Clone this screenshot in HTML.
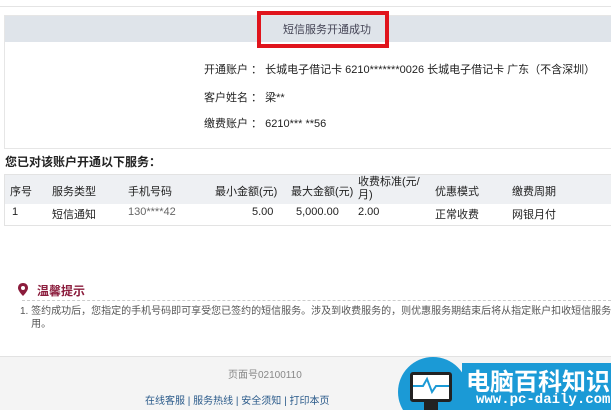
<!DOCTYPE html>
<html style="overflow:hidden;height:410px"><head><meta charset="utf-8"><style>
html,body{overflow:hidden}
body{margin:0;width:611px;height:410px;background:#fff;font-family:"Liberation Sans","Noto Sans CJK SC",sans-serif;font-size:11px;color:#222;position:relative}
.a{position:absolute;white-space:nowrap}
</style></head><body>
<div class="a" style="left:0;top:6px;width:611px;height:1px;background:#e4e4e4"></div>
<div class="a" style="left:4px;top:15px;width:620px;height:132px;border:1px solid #e6e6e6;"></div>
<div class="a" style="left:5px;top:16px;width:606px;height:26px;background:#dfe4ea"></div>
<div class="a" style="left:257px;top:11px;width:124px;height:29px;border:4px solid #e0141c"></div>
<div class="a" style="left:283px;top:21px;color:#445;font-size:11px">短信服务开通成功</div>
<div class="a" style="left:204px;top:61px">开通账户 ： 长城电子借记卡 6210*******0026 长城电子借记卡 广东（不含深圳）</div>
<div class="a" style="left:204px;top:89px">客户姓名 ： 梁**</div>
<div class="a" style="left:204px;top:115px">缴费账户 ： 6210*** **56</div>
<div class="a" style="left:5px;top:153px;font-weight:bold;font-size:12px">您已对该账户开通以下服务：</div>
<div class="a" style="left:4px;top:174px;width:620px;height:50px;border:1px solid #e3e3e3"></div>
<div class="a" style="left:5px;top:175px;width:606px;height:29px;background:#eef0f3"></div>
<div class="a" style="left:10px;top:183px">序号</div>
<div class="a" style="left:52px;top:183px">服务类型</div>
<div class="a" style="left:128px;top:183px">手机号码</div>
<div class="a" style="left:215px;top:183px">最小金额(元)</div>
<div class="a" style="left:291px;top:183px">最大金额(元)</div>
<div class="a" style="left:358px;top:176px;line-height:13px">收费标准(元/<br>月)</div>
<div class="a" style="left:435px;top:183px">优惠模式</div>
<div class="a" style="left:512px;top:183px">缴费周期</div>
<div class="a" style="left:12px;top:206px">1</div>
<div class="a" style="left:52px;top:206px">短信通知</div>
<div class="a" style="left:128px;top:206px;color:#666">130****42</div>
<div class="a" style="left:252px;top:206px">5.00</div>
<div class="a" style="left:296px;top:206px">5,000.00</div>
<div class="a" style="left:358px;top:206px">2.00</div>
<div class="a" style="left:435px;top:206px">正常收费</div>
<div class="a" style="left:512px;top:206px">网银月付</div>
<svg class="a" style="left:18px;top:283px" width="10" height="15" viewBox="0 0 10 15"><path d="M5 0C2 0 0 2 0 5c0 3 5 8 5 8s5-5 5-8C10 2 8 0 5 0z" fill="#8b1c3c"/><circle cx="5" cy="5" r="2" fill="#fff"/></svg>
<div class="a" style="left:37px;top:282px;color:#8b1c3c;font-weight:bold;font-size:12px">温馨提示</div>
<div class="a" style="left:22px;top:300px;width:589px;border-top:1px dashed #ccc"></div>
<div class="a" style="left:20px;top:305px;font-size:10px;color:#555;line-height:13px">1. 签约成功后，您指定的手机号码即可享受您已签约的短信服务。涉及到收费服务的，则优惠服务期结束后将从指定账户扣收短信服务费<br>&nbsp;&nbsp;&nbsp;&nbsp;用。</div>
<div class="a" style="left:0;top:356px;width:611px;height:54px;background:#f4f4f4;border-top:1px solid #e2e2e2"></div>
<div class="a" style="left:228px;top:366px;color:#888;font-size:10px">页面号02100110</div>
<div class="a" style="left:145px;top:392px;color:#2a5a8a;font-size:10px">在线客服 | 服务热线 | 安全须知 | 打印本页</div>
<div style="position:absolute;left:0;top:0;width:611px;height:410px;overflow:hidden">
<div class="a" style="left:398px;top:357px;width:70px;height:70px;border-radius:50%;background:#1b9ad6"></div>
<div class="a" style="left:462px;top:363px;width:149px;height:47px;background:#1b9ad6"></div>
<div class="a" style="left:410px;top:372px;width:36px;height:24px;background:#fff;border:3px solid #222;border-radius:3px"></div>
<svg class="a" style="left:413px;top:376px" width="36" height="20"><path d="M0 10h10l4-7 5 13 4-6h13" stroke="#1b9ad6" stroke-width="2" fill="none"/></svg>
<div class="a" style="left:424px;top:399px;width:14px;height:11px;background:#222"></div>
<div class="a" style="left:466px;top:362px;color:#fff;font-weight:bold;font-size:24px">电脑百科知识</div>
<div class="a" style="left:476px;top:392px;color:#fff;font-weight:bold;font-size:14px;font-family:'Liberation Mono',monospace">www.pc-daily.com</div>
</div>
</body></html>
